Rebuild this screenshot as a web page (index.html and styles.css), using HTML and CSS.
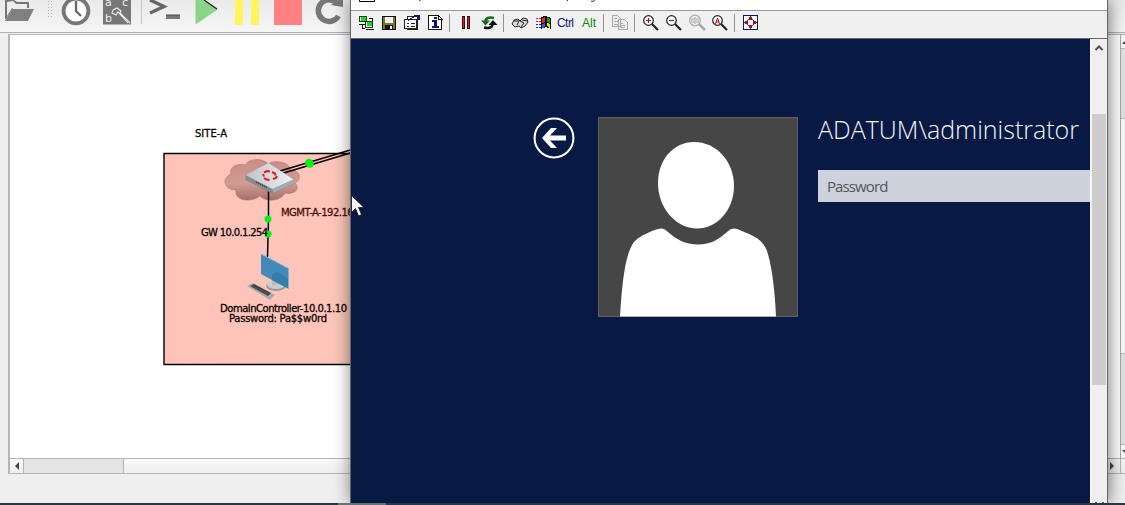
FILE: index.html
```
<!DOCTYPE html>
<html lang="en">
<head>
<meta charset="utf-8">
<title>Network lab</title>
<link rel="stylesheet" href="styles.css">
</head>
<body>
<div class="desktop">
  <main class="app">
    <header class="app-toolbar">
      <svg class="folder" width="32" height="22" viewBox="3 0 32 22"><path d="M5 19V0h9l3 2h12v6H13L6 19z" fill="#777"/><path d="M7 2v14l5-8h15V4H16l-3-3z" fill="#eee"/><path d="M12 9h22l-6 12H5z" fill="#808080"/></svg>
      <span class="grip"></span>
      <svg class="clock" width="30" height="26" viewBox="61 0 30 26"><circle cx="76" cy="11" r="12.4" fill="#fff" stroke="#777" stroke-width="3.8"/><path d="M76 1v10l5 5" fill="none" stroke="#666" stroke-width="2.3"/></svg>
      <svg class="abc" width="28" height="25" viewBox="103 0 28 25"><path d="M103 0h28v24.500h-28z" fill="#777"/><text x="105" y="6" class="letters">a</text><text x="122" y="6" class="letters">c</text><text x="105" y="22" class="letters">b</text><path d="M113 10l4-2 4 3-1 2 10 10M113 10l-1 3 4 2 2-3 10 11" fill="none" stroke="#eee" stroke-width="1.1"/></svg>
      <i class="app-sep"></i>
      <svg class="prompt" width="32" height="22" viewBox="149 0 32 22"><path d="M150 0l14 6.500-14 6.500" fill="none" stroke="#666" stroke-width="3.4"/><path d="M166 17h14" stroke="#777" stroke-width="4"/><path d="M166 15h14" stroke="#444"/></svg>
      <svg class="play" width="25" height="26" viewBox="194 0 25 26"><path d="M195.500 0h9l13 9.500-22 15z" fill="#8ad583"/><path d="M204 0l13 9" stroke="#222" stroke-width="1.3"/></svg>
      <span class="pause"></span>
      <span class="stop"></span>
      <svg class="reload" width="30" height="26" viewBox="314 0 30 26"><path d="M338 4.500A10.800 10.800 0 1 0 338.500 16" fill="none" stroke="#777" stroke-width="5.500"/><path d="M331 5l12 2V0h-4z" fill="#777"/></svg>
    </header>
    <section class="viewport">
      <svg class="topology" width="1110" height="423" viewBox="10 35 1110 423">
        <defs>
          <linearGradient id="zone"><stop offset="0" stop-color="#ffc3b9"/><stop offset=".85" stop-color="#ffc5ba"/><stop offset="1" stop-color="#efc5b3"/></linearGradient>
          <linearGradient id="cloud" x2="0" y2="1"><stop offset="0" stop-color="#c98e87"/><stop offset=".6" stop-color="#cf9b93"/><stop offset="1" stop-color="#a96f69"/></linearGradient>
          <linearGradient id="box"><stop offset="0" stop-color="#bfc3c9"/><stop offset="1" stop-color="#edf0f3"/></linearGradient>
        </defs>
        <path d="M164 153.500H360V364.500H164z" fill="url(#zone)" stroke="#000" stroke-width="1.400"/>
        <text x="195" y="137" textLength="32">SITE-A</text>
        <path d="M235 188c-12 0-15-12-5-16-2-7 6-11 14-9 4-7 18-7 23-1 8-5 23-1 22 6 11 0 12 10 5 13 6 6-1 12-10 10-5 9-20 9-25 3-9 7-26 5-24-6z" transform="translate(1 2)" fill="url(#cloud)" stroke="#a77670" stroke-width=".6"/>
        <path d="M268.500 190V219L267.500 257" stroke="#000" stroke-width="1.500" fill="none"/>
        <path d="M280 171L352 149.500M282 173.500L352 152.500" stroke="#000" stroke-width="1.600"/>
        <path d="M245.500 175l23-12 25 16.500v5L273 194l-27.500-14z" fill="#868a90"/>
        <path d="M245.500 175l23-12 25 16.500-21 9.500z" fill="url(#box)"/>
        <path d="M272.500 189l21-9.500v4.500L273 193z" fill="#a6aab0"/>
        <path d="M256 182l11 5.500" stroke="#444" stroke-width="1.500" stroke-dasharray="1.500 .7"/>
        <path d="M264 172.500l3-1.500 3 .5M272 172l3 1.500.5 2M263 174l1 2.500M277 176l-1 2-3 1M264 178l2.500 1.500 3 .5" fill="none" stroke="#df1a20" stroke-width="2"/>
        <g fill="#00f515"><circle cx="309" cy="162.500" r="3.800"/><circle cx="310" cy="164" r="3.800"/><circle cx="268" cy="219" r="3.500"/><circle cx="268" cy="234" r="3.500"/></g>
        <text x="281" y="216" textLength="87" class="mgmt">MGMT-A-192.168.0</text>
        <text x="201" y="236" textLength="67">GW 10.0.1.254</text>
        <ellipse cx="276" cy="286" rx="10" ry="5" fill="#999"/><ellipse cx="276" cy="284.500" rx="9" ry="4.500" fill="#ccc"/><path d="M272 275l7 3v7h-7z" fill="#bbb"/>
        <path d="M261 254l27.500 14.500V289L261 274z" fill="#438ab8"/><path d="M261 254l27.500 14.500V289" fill="none" stroke="#78b6d5"/><path d="M272 275l5-3 11 6v10l-16-8z" fill="#337daa"/>
        <path d="M247 286l6-3 22 12-5 5z" fill="#aaa"/><path d="M250 286l4-2 17 9-3 3z" fill="#444"/><path d="M252 286l16 8M251 287l15 8" stroke="#888" stroke-width=".5" stroke-dasharray="1 1"/>
        <text x="220" y="312" textLength="127">DomainController-10.0.1.10</text>
        <text x="229" y="322" textLength="98">Password: Pa$$w0rd</text>
      </svg>
      <div class="vscroll"><b class="tiny-up"></b><span></span><b class="tiny-down"></b></div>
      <div class="hscroll"><b class="left-arrow"></b><span></span><b class="right-arrow"></b></div>
    </section>
  </main>
  <footer class="taskbar"><span></span></footer>

  <section class="console">
    <div class="console-title"><svg width="300" height="10" viewBox="350 0 300 10"><path d="M359.500 0v1.500h15V0" fill="none" stroke="#000"/><path d="M419.500 0v1" stroke="#2862b4"/><path d="M420.500 0v1" stroke="#e79b38"/><path d="M567.500 0v1" stroke="#333"/><path d="M591 1.200h3l1-1" fill="none" stroke="#333"/></svg></div>
    <nav class="console-tools">
      <svg width="410" height="27" viewBox="357 11 410 27" shape-rendering="crispEdges">
        <path d="M359.500 16.500h7v5h-7zM365.500 21.500h7v6h-7z" fill="#eee" stroke="#333"/><path d="M361 17h5v4h-5zM367 22h5v4h-5z" fill="#10dc26"/><path d="M359 24h6M366 29.500h8M369 18.500h3v2M362 25v3h3" stroke="#111" fill="none"/>
        <path d="M382.500 16.500h13v13h-13z" fill="#77782a" stroke="#111"/><path d="M385 17h8v6h-8z" fill="#f0f0f0"/><path d="M385 25h8v5h-8z" fill="#111"/><path d="M390 26h2v3h-2z" fill="#fff"/>
        <path d="M407.500 16.500h10v13h-10z" fill="#fff" stroke="#222"/><path d="M404.500 19.500h12v9h-12z" fill="#fff" stroke="#222"/><path d="M407 23.500h2m2 0h4m-8 3h2m2 0h4" stroke="#222"/><path d="M412 17l4-1h3v4" fill="none" stroke="#14146d" stroke-width="2"/><path d="M408 21l5-4" stroke="#222"/>
        <path d="M428.500 15.500h10l3 3v11h-13z" fill="#fff" stroke="#111"/><path d="M438.500 15v4h4" fill="none" stroke="#111"/><path d="M434 17h3v2h-3zM432 20h5v6h2v2h-7v-2h2v-4h-2z" fill="#101080"/>
        <path d="M449.500 14v18M503.500 14v18M603.500 14v18M634.500 14v18M734.500 14v18" stroke="#919191"/>
        <path d="M462.500 16.500h2v12h-2zM467.500 16.500h2v12h-2z" fill="#e11d24" stroke="#331111"/>
        <g shape-rendering="auto"><path d="M494 18q-8-2-9 4" fill="none" stroke="#15691c" stroke-width="2.500"/><path d="M481 20.500h9l-4.500 5z" fill="#15691c"/><path d="M484 27.500q8 2 9-4" fill="none" stroke="#111" stroke-width="2.500"/><path d="M488.500 25l4.500-5 4.500 5z" fill="#111"/></g>
        <path d="M512 24l2-4 4-1 2 2 3-3 4 1 1 3-3 4-4 2-2-2-4 1zM514 21h5l-2 4m3-4l4 2-3 4m1-7l5 1" fill="#ddd" stroke="#222" shape-rendering="auto"/>
        <path d="M541 17l4-1 6 2v11l-5-2-5 2z" fill="#111"/><path d="M542 18l3-1v5l-3 1z" fill="#e32b22"/><path d="M547 18l3 1v4l-3-1z" fill="#0aab1b"/><path d="M542 24l3-1v4l-3 1z" fill="#2362e6"/><path d="M547 23l3 1v4l-3-2z" fill="#f5df09"/><path d="M536 18.500h5M536 21.500h5" stroke="#d22" stroke-dasharray="2 1"/><path d="M536 24.500h5M536 27.500h5" stroke="#22a" stroke-dasharray="2 1"/>
        <text x="557" y="27" fill="#17177d" textLength="17">Ctrl</text><text x="582" y="27" fill="#0c850c" textLength="14">Alt</text>
        <g fill="#eee" stroke="#aaa"><path d="M612.500 15.500h5l3 3v8h-8zM618.500 19.500h6l3 3v7h-9z"/><path d="M614 18.500h3m-3 3h4m-4 3h4m2-1h3m-3 2h5m-5 2h5"/></g>
        <g shape-rendering="auto" fill="none" stroke="#222" stroke-width="1.200"><circle cx="648.500" cy="20.500" r="4.800" fill="#fff6f5"/><circle cx="671.500" cy="20.500" r="4.800" fill="#fff6f5"/><circle cx="717.500" cy="20.500" r="4.800" fill="#fff6f5"/><path d="M652 24l6 6M675 24l6 6M721 24l6 6" stroke-width="2.200"/><g stroke="#aaa"><circle cx="695" cy="20.500" r="5.300"/><path d="M699 24l6 6" stroke-width="2.500"/><path d="M692 18v5m2-5h2v5h-2zm4 0v5" stroke-width="1"/></g></g>
        <path d="M646 20.500h5M648.500 18v5M669 20.500h5" stroke="#a01018"/><path d="M715.500 24l2-6 2 6m-3.200-2h2.500" shape-rendering="auto" fill="none" stroke="#a01018"/>
        <path d="M743.500 15.500h14v14h-14z" fill="#fff" stroke="#14145d"/><path d="M750.500 16l3 4h-6zM750.500 29l3-4h-6zM744 22.500l4-3v6zM757 22.500l-4-3v6z" fill="#9e131b"/>
      </svg>
    </nav>
    <div class="console-body">
      <div class="login">
        <svg class="back" width="42" height="42" viewBox="0 0 42 42"><circle cx="21" cy="21" r="19.400" fill="none" stroke="#fff" stroke-width="2"/><path d="M9 21L18 11h6l-7 7.500h16v5H17l7 7.500h-6z" fill="#fff"/></svg>
        <svg class="avatar" width="200" height="200" viewBox="0 0 200 200"><path d="M.5.500h199v199H.5z" fill="#464646" stroke="#606060"/><path d="M96 25C118 25 136 44 136 69C136 93 119 111.500 99 111.500C78 111.500 60 91 60 66C60 42 76 25 96 25z" fill="#fff"/><path d="M22 199.500C24 170 26 143 34 128C38 121 45 118 54 114C62 111 65 110 70 115C78 122 87 127.500 100 127.500C113 127.500 121 122 129 115C134 110 138 111 144 114C155 119 164 121 169 134C174 149 177 175 178 199.500z" fill="#fff"/></svg>
        <div class="credentials"><h1><svg width="271" height="36"><text x="0" y="25" textLength="261" lengthAdjust="spacingAndGlyphs">ADATUM\administrator</text></svg></h1><div class="password">Password</div></div>
      </div>
      <div class="console-scroll"><svg width="16" height="16" viewBox="0 0 16 16"><path d="M4.500 11L8 7.500 11.500 11" fill="none" stroke="#505050" stroke-width="2"/></svg><span></span><i></i></div>
    </div>
  </section>
  <svg class="cursor" width="14" height="23" viewBox="0 0 14 23"><path d="M.5.500v17l4-4 3 7.500 3-1.500-3-7h5.500z" fill="#fff" stroke="#111" stroke-width=".8"/></svg>
</div>
</body>
</html>
```
FILE: styles.css
```
* { box-sizing: border-box; }
body { margin: 0; overflow: hidden; }
.desktop { position: relative; width: 1125px; height: 505px; overflow: hidden; background: #f0f0f0; display: flex; flex-direction: column; }
.app { height: 503px; background: #efefef; }
.app-toolbar { height: 33px; display: flex; align-items: flex-start; padding-left: 3px; background: linear-gradient(#eaeaea, #f5f5f5); border-bottom: 1px solid #b1b1b1; }
.app-toolbar > * { flex: none; }
.grip { margin-left: 12px; width: 6px; height: 19px; background: radial-gradient(circle, #b6b6b6 .6px, transparent .8px) 0 0 / 3px 3px; }
.clock { margin-left: 8px; }
.abc { margin-left: 12px; }
.letters { font: 11px "DejaVu Sans", sans-serif; fill: #eee; }
.app-sep { margin-left: 10px; width: 1px; height: 24px; background: #c5c5c5; }
.prompt { margin-left: 7px; }
.play { margin-left: 13px; }
.pause { margin-left: 16px; width: 24px; height: 25px; border: solid #fff55b; border-width: 0 8px; }
.stop { margin-left: 15px; width: 28px; height: 25px; background: #ff8080; }
.reload { margin-left: 12px; }
.viewport { margin: 1px 0 0 8px; height: 440px; display: grid; grid-template: 423px 15px / 1110px 5px; border: solid #b5b5b5; border-width: 1px 0 1px 2px; background: #fff; overflow: hidden; }
.topology { display: block; }
.topology text { font: 500 10px "DejaVu Sans", sans-serif; fill: #080303; stroke: #080303; stroke-width: .3px; }
.topology .mgmt { fill: #4a0d08; stroke: #4a0d08; }
.vscroll { background: #e3e3e3; border-left: 1px solid #aaa; display: flex; flex-direction: column; overflow: hidden; }
.tiny-up, .tiny-down { flex: none; height: 14px; background: #f8f8f8; border-bottom: 1px solid #b8b8b8; display: flex; align-items: center; padding-left: 1px; }
.tiny-down { border-top: 1px solid #b8b8b8; border-bottom: 0; }
.tiny-up::before, .tiny-down::before { content: ""; flex: none; border: 4px solid transparent; border-top: 0; border-bottom: 4px solid #444; }
.tiny-down::before { transform: scaleY(-1); }
.vscroll span { flex: 1; margin: 69px 0 90px; background: #fbfbfb; border: solid #b8b8b8; border-width: 1px 0; }
.hscroll { grid-column: 1 / 3; display: flex; height: 15px; background: linear-gradient(#f9f9f9, #eee); border-top: 1px solid #b4b4b4; }
.hscroll span { width: 100px; background: #e4e4e4; border-right: 1px solid #b4b4b4; }
.left-arrow, .right-arrow { width: 14px; display: grid; place-items: center; border-right: 1px solid #b4b4b4; }
.left-arrow::before, .right-arrow::before { content: ""; border: 4px solid transparent; border-left: 0; border-right: 4px solid #444; }
.right-arrow { width: 17px; margin-left: auto; margin-right: 4px; }
.right-arrow::before { transform: scaleX(-1); }
.taskbar { height: 2px; background: #293744; }
.taskbar span { display: block; margin-left: 338px; width: 48px; height: 2px; background: #687175; }
.console { position: absolute; left: 350px; top: 0; width: 758px; height: 503px; border: solid #666; border-width: 0 1px; background: #fff; box-shadow: 1px 0 16px #0008; clip-path: inset(0 -20px 0 -20px); display: flex; flex-direction: column; }
.console-title { height: 10px; }
.console-title svg { display: block; margin-left: -1px; }
.console-tools { height: 29px; padding-left: 6px; background: #f0f0f0; border-top: 1px solid #989898; border-bottom: 1px solid #666; }
.console-tools svg { display: block; }
.console-tools text { font: 12px "Liberation Sans", sans-serif; }
.console-body { flex: 1; display: flex; background: #081944; }
.login { width: 739px; display: flex; align-items: flex-start; overflow: hidden; }
.back { flex: none; margin: 78px 0 0 182px; }
.avatar { flex: none; margin: 78px 0 0 23px; }
.credentials { flex: none; width: 300px; margin: 75px 0 0 20px; }
.credentials h1 { height: 36px; margin: 0; }
.credentials h1 svg { display: block; overflow: visible; }
.credentials h1 text { font: 300 26.5px "Open Sans", "Noto Sans", sans-serif; fill: #f4f5f8; }
.password { margin-top: 20px; height: 32px; padding-left: 9px; background: #ced2dc; color: #50545c; font: 15px/33px "Open Sans", sans-serif; letter-spacing: -.9px; }
.console-scroll { width: 17px; padding: 0 1px; background: #f0f0f0; border-left: 1px solid #fff; display: flex; flex-direction: column; }
.console-scroll svg { margin-left: -1px; }
.console-scroll span { margin-top: 59px; height: 271px; background: #cdcdcd; }
.console-scroll i { margin: auto auto 0; width: 9px; height: 1px; border: solid #555; border-width: 0 2px; }
.cursor { position: absolute; left: 351px; top: 195px; }
```
